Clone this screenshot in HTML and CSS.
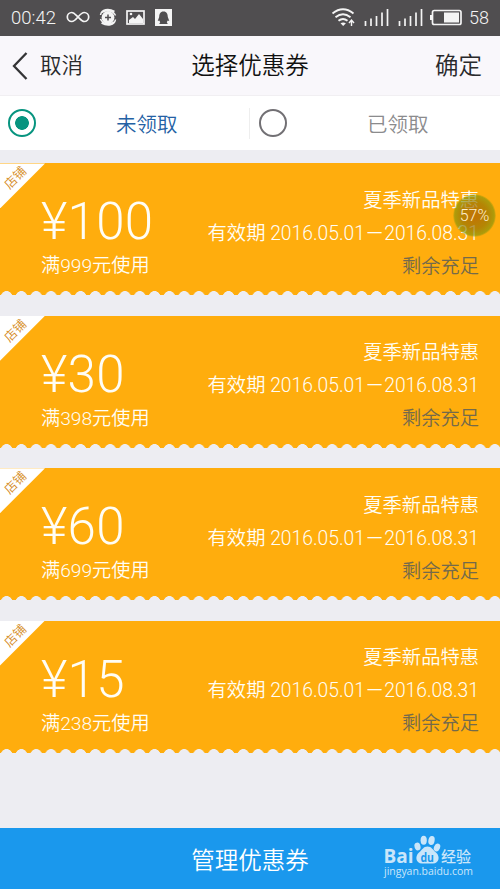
FILE: index.html
```
<!DOCTYPE html>
<html lang="zh-CN">
<head>
<meta charset="utf-8">
<title>选择优惠券</title>
<link rel="stylesheet" href="styles.css">
</head>
<body>
<div class="screen">
  <div class="status">
    <span class="clock">00:42</span>
    <svg class="status-left" width="108" height="36" viewBox="66 0 108 36" fill="none" stroke="#f4f4f4">
      <path d="M78 17c-3-3-4-4.500-6.200-4.500a4.500 4.500 0 0 0 0 9c4.700 0 7.700-9 12.400-9a4.500 4.500 0 0 1 0 9c-2.200 0-3.200-1.500-6.200-4.500" stroke-width="1.700" />
      <circle cx="108" cy="17.500" r="6.400" fill="#f4f4f4" stroke="none" />
      <path d="M105 17.500h6M108 14.500v6" stroke="#504e50" stroke-width="1.500" />
      <path d="M100.500 15c1-6 8-7 14-3.500M101.500 12.500c5-3 12-2 14 3M115.500 19.500c-1 6-8 7-14 3.500M114.500 22c-5 3-12 2-14-3" stroke-width="1.500" />
      <rect x="127" y="11" width="17" height="13" stroke-width="1.700" />
      <path d="M129 23v-3l4-3 2 2 4-5 4 5v4z" fill="#f4f4f4" stroke="none" />
      <circle cx="131" cy="14" r="1.300" fill="#f4f4f4" stroke="none" />
      <rect x="155" y="9" width="17" height="17" fill="#f4f4f4" stroke="none" />
      <path d="M163.500 11.500c-3.300 0-4.300 2.500-4.300 5.500l-1.500 4 1.600-.5.900 1.800-1 1.700h8.600l-1-1.700.9-1.800 1.600.5-1.500-4c0-3-1-5.500-4.300-5.500z" fill="#504e50" stroke="none" />
    </svg>
    <svg class="status-right" width="134" height="36" viewBox="330 0 134 36" fill="none" stroke="#f4f4f4">
      <path d="M332.500 13.500q10.500-8.500 21 0M335.500 17.300q7.500-6 15 0M338.500 20.800q4.500-3.500 9 0" stroke-width="1.900" />
      <path d="M340.500 23.200q2.700-1.500 5.400 0l-2.700 2.800z" fill="#f4f4f4" stroke="none" />
      <path d="M351.500 26v-5M349 23l2.500-3 2.500 3" stroke-width="1.400" />
      <path d="M365.500 26v-5M371 26v-7.500M376.500 26v-10M382 26V12.500M387.500 26V9M399.500 26v-5M405 26v-7.500M410.500 26v-10M416 26V12.500M421.500 26V9" stroke-width="1.700" />
      <rect x="432.500" y="10.500" width="28.500" height="14" rx="1.800" stroke-width="1.700" />
      <path d="M431 15v5" stroke-width="2" />
      <rect x="444" y="12.500" width="15" height="10" fill="#f4f4f4" stroke="none" />
    </svg>
    <span class="battery">58</span>
  </div>

  <header class="nav">
    <span class="cancel">
      <svg width="16" height="28" viewBox="0 0 16 28"><path d="M14.500 1L2 14l12.500 13" fill="none" stroke="#343436" stroke-width="2.300" /></svg>
      取消
    </span>
    <h1>选择优惠券</h1>
    <span class="ok">确定</span>
  </header>

  <div class="tabs">
    <div class="tab selected"><i class="radio"></i><span>未领取</span></div>
    <div class="tab"><i class="radio"></i><span>已领取</span></div>
  </div>

  <main class="coupons">
    <section class="coupon">
      <div class="corner"><span>店铺</span></div>
      <div class="value"><strong>¥100</strong><span>满999元使用</span></div>
      <div class="detail"><span>夏季新品特惠</span><span>有效期 2016.05.01－2016.08.31</span><span class="stock">剩余充足</span></div>
      <div class="float">57%</div>
    </section>
    <section class="coupon">
      <div class="corner"><span>店铺</span></div>
      <div class="value"><strong>¥30</strong><span>满398元使用</span></div>
      <div class="detail"><span>夏季新品特惠</span><span>有效期 2016.05.01－2016.08.31</span><span class="stock">剩余充足</span></div>
    </section>
    <section class="coupon">
      <div class="corner"><span>店铺</span></div>
      <div class="value"><strong>¥60</strong><span>满699元使用</span></div>
      <div class="detail"><span>夏季新品特惠</span><span>有效期 2016.05.01－2016.08.31</span><span class="stock">剩余充足</span></div>
    </section>
    <section class="coupon">
      <div class="corner"><span>店铺</span></div>
      <div class="value"><strong>¥15</strong><span>满238元使用</span></div>
      <div class="detail"><span>夏季新品特惠</span><span>有效期 2016.05.01－2016.08.31</span><span class="stock">剩余充足</span></div>
    </section>
  </main>

  <footer class="manage">
    <span>管理优惠券</span>
    <div class="watermark">
      <svg width="94" height="50" viewBox="382 833 94 50" fill="#cae6fa">
        <ellipse cx="417.500" cy="846.500" rx="3" ry="3.900" transform="rotate(-15 417.500 846.500)" />
        <ellipse cx="423.700" cy="840.300" rx="3.100" ry="4.500" />
        <ellipse cx="431.500" cy="840.500" rx="3.100" ry="4.500" transform="rotate(12 431.500 840.500)" />
        <ellipse cx="437" cy="847.500" rx="3" ry="4" transform="rotate(25 437 847.500)" />
        <path d="M427.500 846.500c4 0 5 3 8.500 6 4.500 4 3 11-3 11h-11c-6 0-7.500-7-3-11 3.500-3 4.500-6 8.500-6z" />
        <text class="brand" x="383.500" y="863" textLength="30" lengthAdjust="spacingAndGlyphs">Bai</text>
        <text class="brand-du" x="420.500" y="861.500" textLength="13.500" lengthAdjust="spacingAndGlyphs">du</text>
        <text class="brand-cn" x="441" y="861.500" textLength="30" lengthAdjust="spacingAndGlyphs">经验</text>
        <text class="brand-url" x="384" y="874.500" textLength="89" lengthAdjust="spacingAndGlyphs">jingyan.baidu.com</text>
      </svg>
    </div>
  </footer>
</div>
</body>
</html>
```
FILE: styles.css
```
* { box-sizing: border-box; }
body {
  margin: 0;
  font-family: Roboto, "Noto Sans CJK SC", sans-serif;
  font-weight: 350;
}
.screen {
  width: 500px;
  height: 889px;
  display: flex;
  flex-direction: column;
  background: #ededf2;
  overflow: hidden;
}
.status {
  height: 36px;
  flex: none;
  display: flex;
  align-items: center;
  padding: 0 11px;
  background: #504e50;
  color: #f4f4f4;
  font-size: 18px;
}
.clock { width: 55px; font-size: 18.500px; white-space: nowrap; }
.status-right { margin-left: auto; margin-right: 5px; }
.battery { width: 20px; }
.clock, .battery { line-height: 20px; padding-bottom: 1px; }
.nav {
  height: 59px;
  flex: none;
  display: grid;
  grid-template-columns: 1fr auto 1fr;
  align-items: center;
  padding: 0 18px 0 12px;
  background: #f9f7fb;
  color: #29292b;
  font-size: 23px;
}
.cancel { display: flex; align-items: center; gap: 12px; font-size: 21.500px; line-height: 30px; }
.nav h1 { margin: 0 -6px 0 0; padding-bottom: 3px; font-size: 23.500px; font-weight: 350; color: #111; }
.ok { padding-bottom: 3px; text-align: right; font-size: 23.500px; }
.tabs {
  height: 55px;
  flex: none;
  display: flex;
  align-items: center;
  background: #fff;
  border-top: 1px solid #f1eff2;
}
.tab { width: 250px; display: flex; align-items: center; padding-left: 9px; color: #8b8b8d; font-size: 20.500px; }
.tab:first-child { border-right: 1px solid #eee; padding-left: 8px; }
.tab span { width: 62px; margin-left: 80px; padding-bottom: 1px; white-space: nowrap; }
.selected span { color: #2461a4; }
.radio {
  width: 28px;
  height: 28px;
  flex: none;
  border: 2px solid #727074;
  border-width: 2.500px;
  border-radius: 50%;
}
.selected .radio {
  border-color: #07947f;
  background: radial-gradient(circle, #07947f 6.500px, transparent 7.200px);
}
.coupons { flex: 1; padding-top: 13.400px; display: flex; flex-direction: column; gap: 20.400px; }
.coupon {
  position: relative;
  height: 132px;
  flex: none;
  display: flex;
  justify-content: space-between;
  padding: 0 21px 0 41px;
  background: #ffad0d;
  color: #fffdf5;
}
.coupon::after {
  content: "";
  position: absolute;
  left: 0;
  right: 0;
  bottom: 0;
  height: 4px;
  background: radial-gradient(circle at 50% 5.800px, #ededf2 5.400px, transparent 6px) -.800px 0 / 14.800px 4px repeat-x;
}
.corner {
  position: absolute;
  left: 0;
  top: 0;
  width: 45px;
  height: 45px;
  background: #fff;
  clip-path: polygon(0 0, 100% 0, 0 100%);
  color: #d58c25;
  font-size: 12.500px;
}
.corner span {
  position: absolute;
  left: 3px;
  top: 6px;
  line-height: 18px;
  white-space: nowrap;
  transform: rotate(-45deg);
}
.value { display: flex; flex-direction: column; padding-top: 30px; font-size: 19.200px; }
.value strong { font-size: 51px; font-weight: 300; line-height: 58px; letter-spacing: .3px; }
.value span { line-height: 29px; }
.detail { display: flex; flex-direction: column; padding-top: 20.500px; align-items: flex-end; font-size: 19.300px; line-height: 33px; white-space: nowrap; }
.stock { color: #746a4b; }
.float {
  position: absolute;
  left: 453px;
  top: 31px;
  width: 43px;
  height: 43px;
  border-radius: 50%;
  background: radial-gradient(circle, rgba(165, 94, 0, .7) 10%, rgba(145, 115, 0, .68) 45%, rgba(118, 145, 10, .6) 65%, transparent 72%);
  color: #fff0cf;
  font-size: 16px;
  line-height: 43px;
  text-align: center;
}
.manage {
  position: relative;
  height: 61px;
  flex: none;
  display: flex;
  align-items: center;
  justify-content: center;
  background: #1a98ed;
  color: #fff;
  font-size: 23.500px;
}
.watermark { position: absolute; left: 382px; top: 5px; }
.watermark svg { display: block; }
.brand { font: bold 20px "Open Sans", sans-serif; }
.brand-du { font: bold 13px "Open Sans", sans-serif; fill: #1a98ed; }
.brand-cn { font: 500 15px "Noto Sans CJK SC", sans-serif; }
.brand-url { font: 500 11.500px "Open Sans", sans-serif; }
```
